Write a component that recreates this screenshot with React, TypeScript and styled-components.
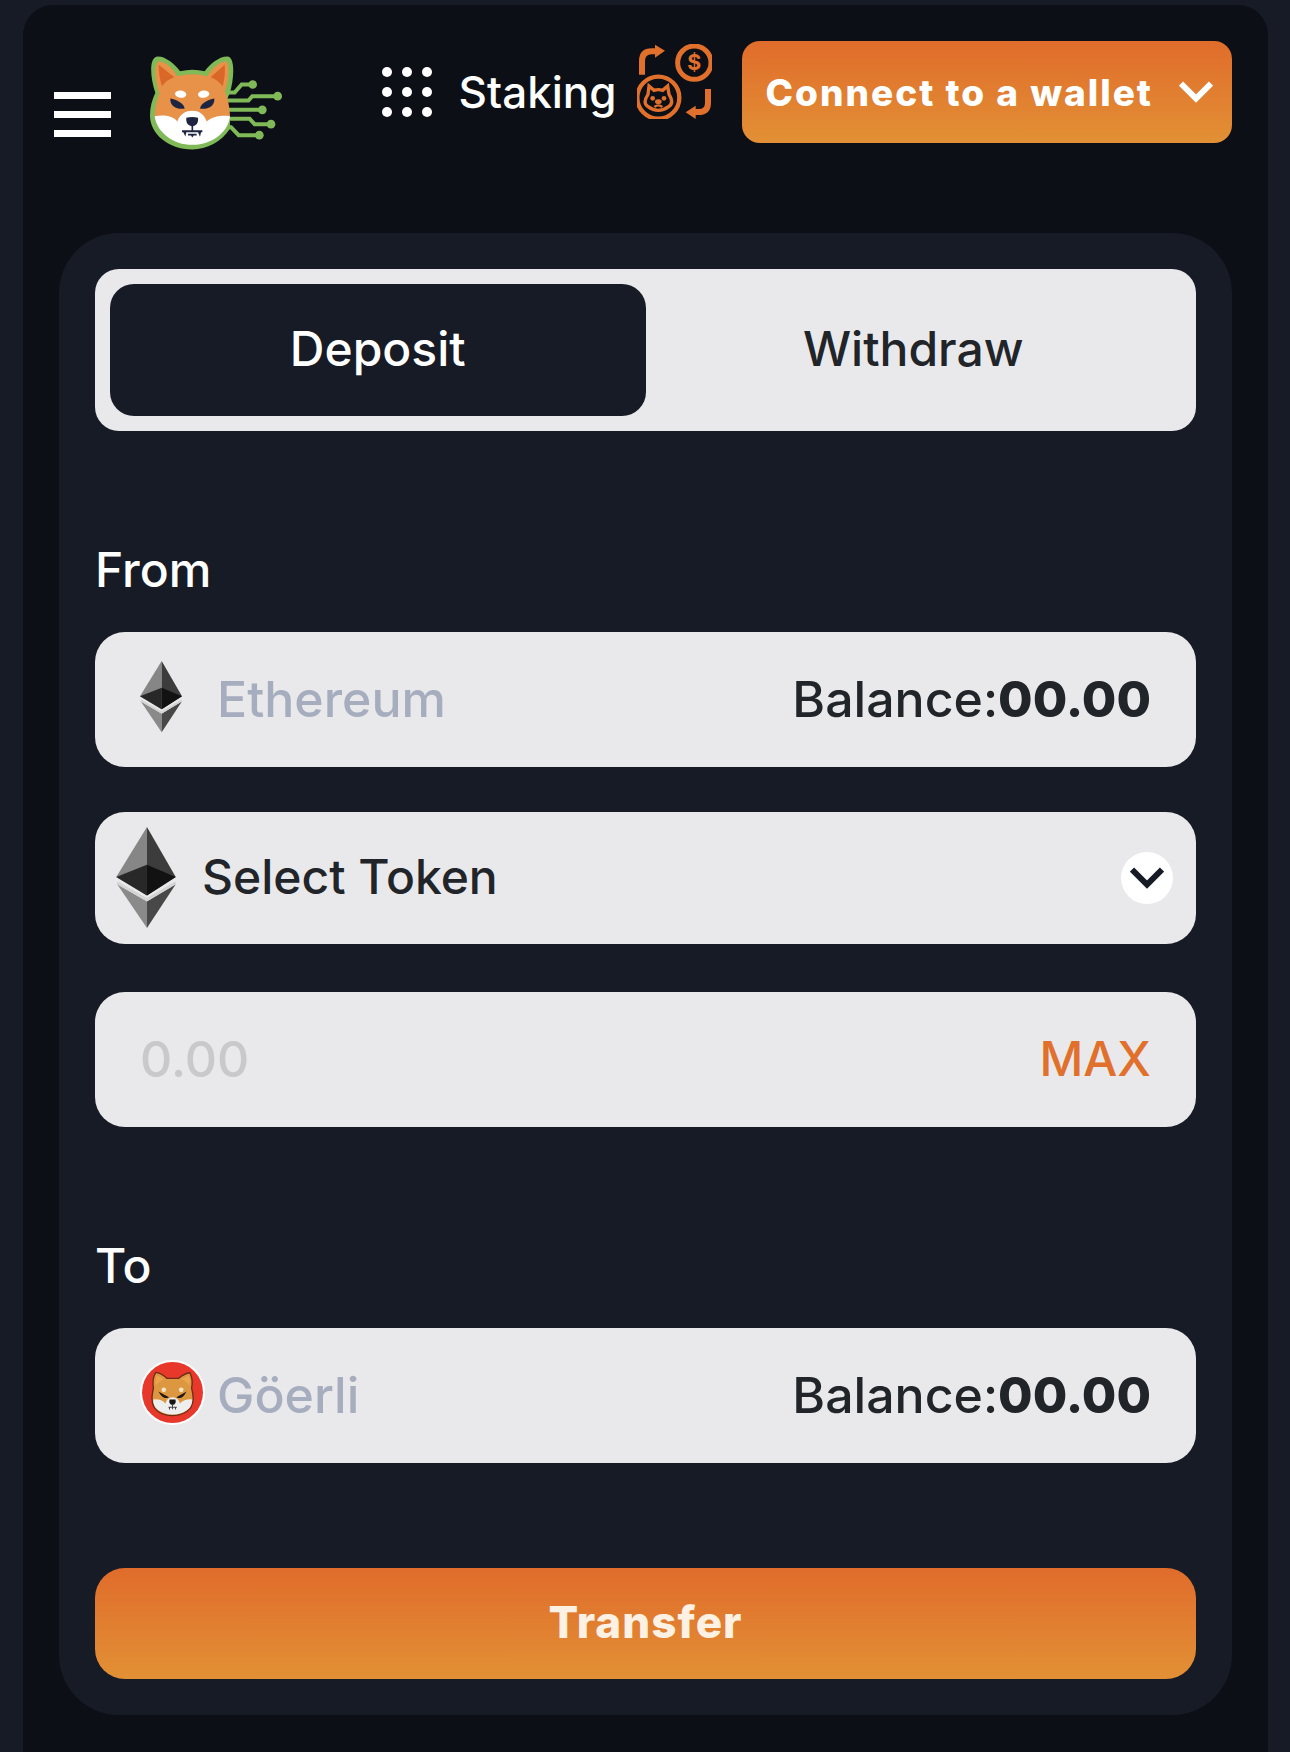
import React, { useState } from "react";
import styled, { createGlobalStyle } from "styled-components";

const GlobalStyle = createGlobalStyle`
  *, *::before, *::after { box-sizing: border-box; }
  body {
    margin: 0;
    background: #171b26;
    color: #ffffff;
    font-family: Inter, "Open Sans", sans-serif;
    font-weight: 500;
  }
  button, input, select { font: inherit; color: inherit; }
`;

const Shell = styled.div`
  min-height: calc(100vh - 5px);
  margin: 5px 22px 0 23px;
  padding: 36px 36px 37px;
  background: #0c0f16;
  border-radius: 30px 30px 0 0;
`;

const Header = styled.header`
  display: flex;
  align-items: flex-start;
  justify-content: space-between;
  height: 102px;
  margin-left: -5px;
`;

const Brand = styled.div`
  display: flex;
  align-items: center;
  gap: 39px;
  padding-top: 15px;
`;

const MenuButton = styled.button`
  display: flex;
  flex-direction: column;
  gap: 12px;
  width: 57px;
  padding: 22px 0 0;
  border: 0;
  background: none;
  cursor: pointer;
`;

const MenuBar = styled.span`
  height: 7px;
  background: #ffffff;
`;

const HomeLink = styled.a`
  display: flex;
`;

const Actions = styled.nav`
  display: flex;
  align-items: center;
`;

const DotsButton = styled.button`
  display: grid;
  grid-template-columns: repeat(3, 10px);
  gap: 10px;
  padding: 0;
  border: 0;
  background: none;
  cursor: pointer;
`;

const Dot = styled.span`
  height: 10px;
  border-radius: 50%;
  background: #ffffff;
`;

const StakingLink = styled.a`
  margin: 0 20px 0 27px;
  color: #ffffff;
  font-size: 44px;
  line-height: 50px;
  text-decoration: none;
`;

const SwapLink = styled.a`
  display: flex;
  align-self: flex-start;
  margin: 3px 30px 0 0;
`;

const PrimaryButton = styled.button`
  border: 0;
  background: linear-gradient(180deg, #e06c2b 0%, #e29035 100%);
  font-weight: 800;
  cursor: pointer;
`;

const WalletButton = styled(PrimaryButton)`
  display: flex;
  align-items: center;
  justify-content: space-between;
  gap: 26px;
  height: 102px;
  padding: 0 19px 0 24px;
  border-radius: 18px;
  color: #ffffff;
  font-size: 37px;
  letter-spacing: 2px;
  white-space: nowrap;
`;

const Card = styled.main`
  margin-top: 90px;
  padding: 36px;
  border-radius: 60px;
  background: #171b26;
`;

const Tabs = styled.div`
  display: grid;
  grid-template-columns: 1fr 1fr;
  padding: 15px;
  border-radius: 24px;
  background: #e9e9eb;
`;

const Tab = styled.button<{ $active: boolean }>`
  height: 132px;
  padding: 0 0 4px;
  border: 0;
  border-radius: 24px;
  background: ${(p) => (p.$active ? "#171b26" : "transparent")};
  color: ${(p) => (p.$active ? "#ffffff" : "#212529")};
  font-size: 48px;
  cursor: pointer;
`;

const Section = styled.section`
  display: flex;
  flex-direction: column;
  margin-top: 110px;
`;

const SectionTitle = styled.h2`
  margin: 0 0 33px;
  font-size: 48px;
  font-weight: 500;
  line-height: 58px;
`;

const Field = styled.div`
  display: flex;
  align-items: center;
  height: 135px;
  padding: 0 45px 2px;
  border-radius: 30px;
  background: #e9e9eb;
  color: #212529;
  font-size: 50px;
`;

const IconSlot = styled.span`
  display: flex;
  flex: none;
  width: 77px;
  padding-bottom: 4px;
`;

const TextInput = styled.input<{ $hint: string }>`
  flex: 1;
  min-width: 0;
  height: 62px;
  padding: 0;
  border: 0;
  outline: 0;
  background: none;
  color: #212529;

  &::placeholder {
    color: ${(p) => p.$hint};
    opacity: 1;
  }
`;

const Balance = styled.span`
  white-space: nowrap;
`;

const Amount = styled.strong`
  font-weight: 800;
`;

const TokenField = styled.div`
  display: grid;
  grid-template-columns: 60px 1fr 52px;
  align-items: center;
  height: 132px;
  margin: 45px 0 48px;
  padding: 0 23px 0 21px;
  border-radius: 30px;
  background: #e9e9eb;
  color: #212529;
`;

const TokenSelect = styled.select`
  grid-area: 1 / 1 / 2 / 4;
  width: 100%;
  height: 100%;
  padding: 0 76px 3px 86px;
  border: 0;
  outline: 0;
  appearance: none;
  background: none;
  font-size: 48px;
  cursor: pointer;
`;

const TokenIcon = styled.span`
  grid-area: 1 / 1 / 2 / 2;
  display: flex;
  pointer-events: none;
`;

const TokenArrow = styled.span`
  grid-area: 1 / 3 / 2 / 4;
  display: grid;
  place-items: center;
  width: 52px;
  height: 52px;
  border-radius: 50%;
  background: #ffffff;
  color: #171b26;
  pointer-events: none;
`;

const MaxButton = styled.button`
  padding: 0;
  border: 0;
  background: none;
  color: #e0702c;
  font-size: 48px;
  cursor: pointer;
`;

const TransferButton = styled(PrimaryButton)`
  width: 100%;
  height: 111px;
  margin-top: 105px;
  padding: 0 0 3px;
  border-radius: 30px;
  color: #fdf1e3;
  font-size: 44px;
  letter-spacing: 1px;
`;

function Chevron({ width }: { width: number }) {
  return (
    <svg width={width} height={width * 0.62} viewBox="0 0 34 21" fill="none" aria-hidden="true">
      <path d="M2 2.5 17 17.5 32 2.5" stroke="currentColor" strokeWidth="6" />
    </svg>
  );
}

function EthereumMark({ width, height }: { width: number; height: number }) {
  return (
    <svg width={width} height={height} viewBox="0 0 126 216" aria-hidden="true">
      <path d="M65 0 0 106 65 145Z" fill="#868686" />
      <path d="M65 0 126 106 65 145Z" fill="#3c3c3c" />
      <path d="M65 80 0 106 65 145Z" fill="#282828" />
      <path d="M65 80 126 106 65 145Z" fill="#121212" />
      <path d="M2 121 65 158V214Z" fill="#8a8a8a" />
      <path d="M126 121 65 158V214Z" fill="#484848" />
      <path d="M2 118 65 154 126 118" fill="none" stroke="#d4d4d5" strokeWidth="6" />
    </svg>
  );
}

function ShibaLogo() {
  return (
    <svg width="132" height="94" viewBox="450 167 396 281" role="img" aria-label="Home">
      <g fill="none" stroke="#80b958" strokeWidth="12">
        <path d="M676 276H704L725 252H758M676 300H745L757 287H833M680 328H787M680 355H749L764 371H813M672 380H693L716 404H778" />
      </g>
      <g fill="#80b958">
        <circle cx="758" cy="252" r="13" />
        <circle cx="833" cy="287" r="13" />
        <circle cx="787" cy="328" r="13" />
        <circle cx="813" cy="371" r="13" />
        <circle cx="778" cy="404" r="13" />
        <path d="M466 277C450 230 446 168 474 168 498 168 525 192 540 212 565 206 590 206 614 212 630 192 655 168 682 168 706 168 703 235 689 278L680 300 690 350V385C665 424 620 447 577 447 505 447 450 400 450 345 450 320 456 300 466 277Z" />
      </g>
      <path
        d="M478 278C462 235 462 183 478 182 500 185 520 205 532 227 560 219 595 219 622 227 634 205 655 185 677 182 690 185 688 240 675 272 684 295 690 325 690 352L577 400 464 352C465 320 470 300 478 278Z"
        fill="#e89148"
      />
      <path d="M476 193 523 230C505 236 493 245 486 257 479 235 476 215 476 193Z" fill="#d96728" />
      <path d="M674 193 632 230C649 236 660 246 668 258 674 235 676 215 674 193Z" fill="#d96728" />
      <path
        d="M464 347C490 342 520 346 532 363 540 340 558 331 577 331 596 331 612 340 620 363 635 348 665 343 690 347 684 400 630 433 577 433 520 433 470 395 464 347Z"
        fill="#ffffff"
      />
      <ellipse cx="542" cy="281" rx="17" ry="11" fill="#ffffff" transform="rotate(6 542 281)" />
      <ellipse cx="611" cy="281" rx="17" ry="11" fill="#ffffff" transform="rotate(-6 611 281)" />
      <g fill="#1f2540">
        <path d="M511 294C530 298 551 308 554 324 536 328 509 320 511 294Z" />
        <path d="M643 294C624 298 603 308 600 324 618 328 645 320 643 294Z" />
        <path d="M559 352Q577 347 594 352C596 368 588 377 577 377 565 377 557 368 559 352Z" />
        <path d="M546 389H607V395H603L600 409 594 395H559L556 408 550 395H546Z" />
        <path d="M564 400H590V405H581L577 411 573 405H564Z" />
      </g>
      <path d="M577 375V392" stroke="#1f2540" strokeWidth="5" />
    </svg>
  );
}

function StakingSwapIcon() {
  return (
    <svg width="75" height="75" viewBox="825 71 225 225" role="img" aria-label="Swap">
      <g fill="none" stroke="#e0702c">
        <path d="M840 163V122Q840 93 869 93H886" strokeWidth="18" />
        <path d="M1038 206V247Q1038 275 1010 275H998" strokeWidth="18" />
        <circle cx="997" cy="127" r="50" strokeWidth="15" />
        <circle cx="889" cy="232" r="63" strokeWidth="13" />
        <path
          d="M858 222 861 197 876 210Q889 206 902 210L917 197 921 222Q937 248 921 258 905 270 889 270 873 270 857 258 841 248 858 222Z"
          strokeWidth="10"
        />
        <path d="M877 260Q889 250 901 260" strokeWidth="7" />
      </g>
      <g fill="#e0702c">
        <path d="M879 73 909 91 879 112Z" />
        <path d="M1001 256 971 276 1001 296Z" />
        <ellipse cx="889" cy="244" rx="10" ry="7" />
        <circle cx="872" cy="234" r="7" />
        <circle cx="906" cy="234" r="7" />
        <text x="997" y="150" textAnchor="middle" fontSize="64" fontWeight="700">
          $
        </text>
      </g>
    </svg>
  );
}

function ShibaCoin() {
  return (
    <svg width="65" height="65" viewBox="182 1138 194 194" aria-hidden="true">
      <circle cx="279" cy="1235" r="97" fill="#ffffff" />
      <circle cx="279" cy="1235" r="91" fill="#e8382b" />
      <path
        d="M229 1175C240 1177 254 1184 262 1193H297C307 1184 320 1177 331 1176 338 1190 339 1208 336 1222 342 1245 344 1262 333 1281 318 1298 297 1304 279 1304 259 1304 238 1298 225 1281 214 1262 218 1242 222 1222 219 1203 222 1186 229 1175Z"
        fill="#dd9740"
        stroke="#6b2d1a"
        strokeWidth="4"
      />
      <path d="M232 1184 254 1195Q238 1201 229 1216Q226 1200 232 1184ZM328 1184 305 1195Q322 1201 330 1216Q334 1200 328 1184Z" fill="#eba54e" />
      <path
        d="M221 1256Q244 1253 258 1268 262 1250 279 1249 297 1250 301 1268 317 1253 338 1256 338 1274 326 1285 305 1301 279 1301 254 1301 233 1285 221 1274 221 1256Z"
        fill="#eeeeee"
      />
      <circle cx="253" cy="1227" r="7" fill="#f8e3c0" />
      <circle cx="305" cy="1227" r="7" fill="#f8e3c0" />
      <path d="M241 1236 265 1249Q252 1254 241 1236ZM317 1236 294 1249Q307 1254 317 1236Z" fill="#1b1718" stroke="#1b1718" strokeWidth="3" />
      <path d="M270 1256H288Q291 1271 279 1272 267 1271 270 1256Z" fill="#151515" />
      <path d="M279 1270V1278M267 1279H292M270 1279V1286M279 1279V1285M288 1279V1286" fill="none" stroke="#444444" strokeWidth="3" />
    </svg>
  );
}

export default function App() {
  const [tab, setTab] = useState("Deposit");
  const [amount, setAmount] = useState("");

  return (
    <>
      <GlobalStyle />
      <Shell>
        <Header>
          <Brand>
            <MenuButton type="button" aria-label="Open menu">
              <MenuBar />
              <MenuBar />
              <MenuBar />
            </MenuButton>
            <HomeLink href="#home">
              <ShibaLogo />
            </HomeLink>
          </Brand>
          <Actions>
            <DotsButton type="button" aria-label="Apps">
              {Array.from({ length: 9 }, (_, i) => (
                <Dot key={i} />
              ))}
            </DotsButton>
            <StakingLink href="#staking">Staking</StakingLink>
            <SwapLink href="#swap">
              <StakingSwapIcon />
            </SwapLink>
            <WalletButton type="button">
              Connect to a wallet
              <Chevron width={34} />
            </WalletButton>
          </Actions>
        </Header>

        <Card>
          <Tabs role="tablist">
            {["Deposit", "Withdraw"].map((name) => (
              <Tab
                key={name}
                type="button"
                role="tab"
                aria-selected={tab === name}
                $active={tab === name}
                onClick={() => setTab(name)}
              >
                {name}
              </Tab>
            ))}
          </Tabs>

          <Section>
            <SectionTitle>From</SectionTitle>
            <Field>
              <IconSlot>
                <EthereumMark width={42} height={72} />
              </IconSlot>
              <TextInput $hint="#a6adbf" aria-label="From network" placeholder="Ethereum" />
              <Balance>
                Balance:<Amount>00.00</Amount>
              </Balance>
            </Field>
            <TokenField>
              <TokenSelect aria-label="Token" defaultValue="">
                <option value="">Select Token</option>
              </TokenSelect>
              <TokenIcon>
                <EthereumMark width={60} height={102} />
              </TokenIcon>
              <TokenArrow>
                <Chevron width={34} />
              </TokenArrow>
            </TokenField>
            <Field>
              <TextInput
                $hint="#c9c9cb"
                aria-label="Amount"
                inputMode="decimal"
                placeholder="0.00"
                value={amount}
                onChange={(e) => setAmount(e.target.value)}
              />
              <MaxButton type="button">MAX</MaxButton>
            </Field>
          </Section>

          <Section>
            <SectionTitle>To</SectionTitle>
            <Field>
              <IconSlot>
                <ShibaCoin />
              </IconSlot>
              <TextInput $hint="#a6adbf" aria-label="To network" placeholder="Göerli" />
              <Balance>
                Balance:<Amount>00.00</Amount>
              </Balance>
            </Field>
          </Section>

          <TransferButton type="button">Transfer</TransferButton>
        </Card>
      </Shell>
    </>
  );
}
